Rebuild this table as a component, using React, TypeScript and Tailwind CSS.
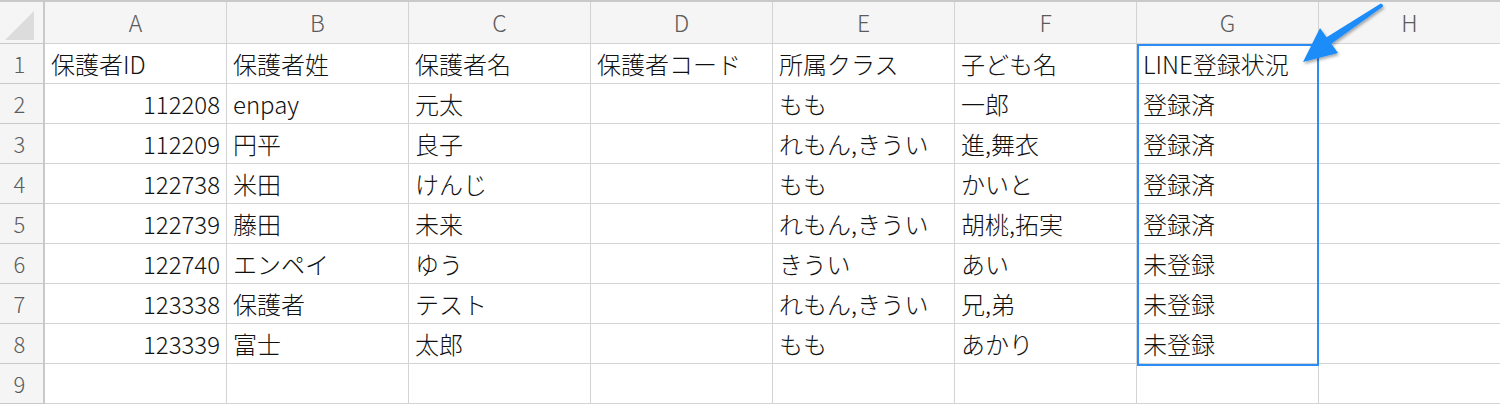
import React from "react";

const COLS = ["A", "B", "C", "D", "E", "F", "G", "H"];

const ROWS: string[][] = [
  ["保護者ID", "保護者姓", "保護者名", "保護者コード", "所属クラス", "子ども名", "LINE登録状況", ""],
  ["112208", "enpay", "元太", "", "もも", "一郎", "登録済", ""],
  ["112209", "円平", "良子", "", "れもん,きうい", "進,舞衣", "登録済", ""],
  ["122738", "米田", "けんじ", "", "もも", "かいと", "登録済", ""],
  ["122739", "藤田", "未来", "", "れもん,きうい", "胡桃,拓実", "登録済", ""],
  ["122740", "エンペイ", "ゆう", "", "きうい", "あい", "未登録", ""],
  ["123338", "保護者", "テスト", "", "れもん,きうい", "兄,弟", "未登録", ""],
  ["123339", "富士", "太郎", "", "もも", "あかり", "未登録", ""],
  ["", "", "", "", "", "", "", ""],
];

const font = { fontFamily: '"Noto Sans CJK JP", "Noto Sans", sans-serif' };

function Arrow() {
  return (
    <svg
      className="pointer-events-none absolute left-0 top-0"
      width={1500}
      height={404}
      viewBox="0 0 1500 404"
    >
      <defs>
        <filter id="sh" x="-20%" y="-20%" width="140%" height="140%">
          <feDropShadow dx="1" dy="2" stdDeviation="1.6" floodColor="#000" floodOpacity="0.35" />
        </filter>
      </defs>
      <path
        d="M1303 62 L1320 28 L1326.6 37.2 L1380.8 3.6 Q1383.6 4.6 1383.1 6.4 L1331.3 43.8 L1338 53 Z"
        fill="#1e8cf8"
        filter="url(#sh)"
      />
    </svg>
  );
}

export default function App() {
  return (
    <div className="relative h-[404px] w-[1500px] overflow-hidden bg-white" style={font}>
      <div className="grid grid-cols-[45px_repeat(8,182px)] border-t-2 border-[#c9c9c9]">
        {/* column headers */}
        <div className="flex h-[42px] items-center justify-center border-r-2 border-b border-[#c9c9c9] bg-[#f5f5f5]">
          <div className="mt-[5px] mr-[4px] h-0 w-0 border-b-[29px] border-l-[29px] border-b-[#dcdcdc] border-l-transparent" />
        </div>
        {COLS.map((c) => (
          <div
            key={c}
            className="flex h-[42px] items-center justify-center border-r border-b border-[#d3d3d3] bg-[#f5f5f5] text-[23px] font-light text-[#5b5b5b]"
          >
            {c}
          </div>
        ))}

        {ROWS.map((row, ri) => (
          <React.Fragment key={ri}>
            <div className="flex h-[40px] items-center justify-center border-r-2 border-b border-[#c9c9c9] bg-[#f5f5f5] pr-[4px] text-[22px] font-light text-[#5b5b5b]">
              {ri + 1}
            </div>
            {row.map((v, ci) => {
              const num = ri > 0 && ci === 0;
              return (
                <div
                  key={ci}
                  className={
                    "flex h-[40px] items-center overflow-hidden whitespace-nowrap border-r border-b border-[#d3d3d3] px-[6px] text-[24px] font-light text-[#111] " +
                    (num ? "justify-end" : "justify-start")
                  }
                >
                  {v}
                </div>
              );
            })}
          </React.Fragment>
        ))}
      </div>

      {/* selection G1:G8 */}
      <div className="pointer-events-none absolute left-[1137px] top-[44px] h-[322px] w-[182px] border-2 border-[#2a8df5]" />

      <Arrow />
    </div>
  );
}
